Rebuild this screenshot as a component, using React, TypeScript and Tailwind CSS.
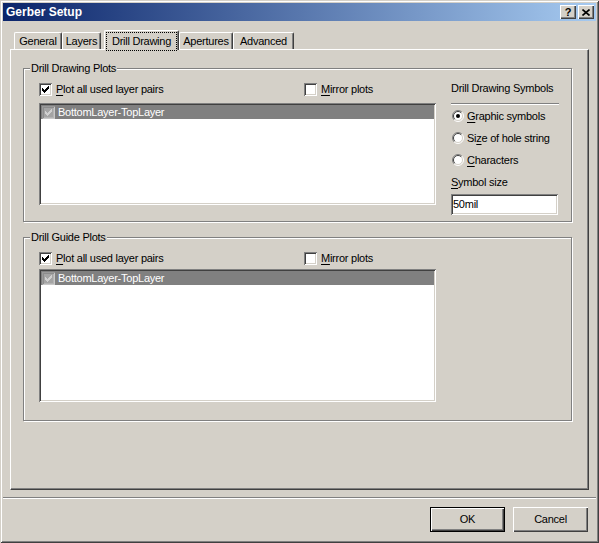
import type { ReactNode } from "react";

const TABS = [
  { label: "General", w: "w-[48px]" },
  { label: "Layers", w: "w-[39px]" },
];
const TABS_AFTER = [
  { label: "Apertures", w: "w-[54px]" },
  { label: "Advanced", w: "w-[61px]" },
];

function Mn({ children }: { children: ReactNode }) {
  return <span className="underline decoration-1 underline-offset-[2px]">{children}</span>;
}

function CheckMark({ color }: { color: string }) {
  const starts = [2, 3, 4, 3, 2, 1, 0];
  return (
    <svg className="absolute left-0 top-0" width="13" height="13" viewBox="0 0 13 13">
      {starts.map((r, i) => (
        <rect key={i} x={3 + i} y={3 + r} width="1" height="3" fill={color} />
      ))}
    </svg>
  );
}

function CheckBox({ checked }: { checked?: boolean }) {
  return (
    <span className="relative block h-[13px] w-[13px] shrink-0 bg-white shadow-[inset_1px_1px_0_#808080,inset_-1px_-1px_0_#ffffff,inset_2px_2px_0_#404040,inset_-2px_-2px_0_#d4d0c8]">
      {checked && <CheckMark color="#000000" />}
    </span>
  );
}

function DimCheckBox() {
  return (
    <span className="relative block h-[13px] w-[13px] shrink-0 bg-[#a4a4a4] shadow-[inset_1px_1px_0_#9a9a9a,inset_-1px_-1px_0_#c8c8c8,inset_2px_2px_0_#8c8c8c,inset_-2px_-2px_0_#b4b4b4]">
      <CheckMark color="#d0d0d0" />
    </span>
  );
}

function Radio({ on }: { on?: boolean }) {
  return (
    <svg width="12" height="12" viewBox="0 0 12 12" className="shrink-0">
      <circle cx="6" cy="6" r="5" fill="#ffffff" />
      <path d="M2.1 9.9A5.5 5.5 0 0 1 9.9 2.1" stroke="#808080" fill="none" />
      <path d="M9.9 2.1A5.5 5.5 0 0 1 2.1 9.9" stroke="#ffffff" fill="none" />
      <path d="M2.8 9.2A4.5 4.5 0 0 1 9.2 2.8" stroke="#404040" fill="none" />
      <path d="M9.2 2.8A4.5 4.5 0 0 1 2.8 9.2" stroke="#d4d0c8" fill="none" />
      {on && <circle cx="6" cy="6" r="2" fill="#000000" />}
    </svg>
  );
}

function PlotRow() {
  return (
    <div className="flex h-[13px] items-center leading-[13px]">
      <div className="flex w-[265px] items-center gap-[4px]">
        <CheckBox checked />
        <span>
          <Mn>P</Mn>lot all used layer pairs
        </span>
      </div>
      <div className="flex items-center gap-[4px]">
        <CheckBox />
        <span>
          <Mn>M</Mn>irror plots
        </span>
      </div>
    </div>
  );
}

function LayerList({ className }: { className: string }) {
  return (
    <div
      className={`w-[397px] bg-white p-[2px] shadow-[inset_1px_1px_0_#808080,inset_-1px_-1px_0_#ffffff,inset_2px_2px_0_#404040,inset_-2px_-2px_0_#d4d0c8] ${className}`}
    >
      <div className="flex h-[14px] items-center gap-[3px] bg-[#808080] pl-[1px] leading-[13px] text-white">
        <DimCheckBox />
        <span>BottomLayer-TopLayer</span>
      </div>
    </div>
  );
}

function GroupLabel({ children }: { children: ReactNode }) {
  return (
    <span className="absolute left-[6px] top-[-7px] bg-[#d4d0c8] px-[1px] leading-[13px]">{children}</span>
  );
}

function CaptionButton({ children }: { children: ReactNode }) {
  return (
    <div className="flex h-[14px] w-[16px] items-center justify-center bg-[#d4d0c8] shadow-[inset_1px_1px_0_#ffffff,inset_-1px_-1px_0_#404040,inset_-2px_-2px_0_#808080]">
      {children}
    </div>
  );
}

export default function App() {
  return (
    <div className="flex h-[543px] w-[599px] flex-col overflow-hidden bg-[#d4d0c8] p-[3px] font-['Liberation_Sans',Arial,sans-serif] text-[11px] tracking-[-0.25px] text-black shadow-[inset_1px_1px_0_#d4d0c8,inset_-1px_-1px_0_#404040,inset_2px_2px_0_#ffffff,inset_-2px_-2px_0_#808080]">
      {/* Title bar */}
      <div className="flex h-[18px] shrink-0 items-center bg-[linear-gradient(to_right,#0a246a,#a6caf0)] pl-[3px] pr-[2px]">
        <span className="flex-1 text-[12px] font-bold tracking-normal text-white">Gerber Setup</span>
        <div className="flex gap-[2px]">
          <CaptionButton>
            <span className="text-[11px] font-bold leading-none tracking-normal">?</span>
          </CaptionButton>
          <CaptionButton>
            <svg width="8" height="7" viewBox="0 0 8 7">
              <path d="M0.5 0.5L7.5 6.5M7.5 0.5L0.5 6.5" stroke="#000000" strokeWidth="1.6" />
            </svg>
          </CaptionButton>
        </div>
      </div>

      {/* Tabs */}
      <div className="relative z-10 ml-[11px] mt-[9px] flex h-[19px] shrink-0 items-end">
        {TABS.map((t) => (
          <div
            key={t.label}
            className={`flex h-[17px] items-center justify-center rounded-t-[2px] border-l border-t border-r border-l-white border-t-white border-r-[#404040] shadow-[inset_-1px_0_0_#808080] ${t.w}`}
          >
            {t.label}
          </div>
        ))}
        <div className="-mb-px ml-[3px] flex h-[20px] w-[75px] flex-col rounded-t-[2px] border-l border-t border-r border-l-white border-t-white border-r-[#404040] bg-[#d4d0c8] pb-[1px] pl-[1px] pr-px pt-[1px] shadow-[inset_-1px_0_0_#808080]">
          <div className="flex flex-1 items-center justify-center border border-dotted border-black">
            Drill Drawing
          </div>
        </div>
        {TABS_AFTER.map((t) => (
          <div
            key={t.label}
            className={`flex h-[17px] items-center justify-center rounded-t-[2px] border-l border-t border-r border-l-white border-t-white border-r-[#404040] shadow-[inset_-1px_0_0_#808080] ${t.w}`}
          >
            {t.label}
          </div>
        ))}
      </div>

      {/* Tab panel */}
      <div className="relative z-0 ml-[7px] h-[441px] w-[579px] shrink-0 border border-l-white border-t-white border-r-[#404040] border-b-[#404040] pl-[12px] shadow-[inset_-1px_-1px_0_#808080]">
        {/* Drill Drawing Plots */}
        <div className="relative mt-[18px] flex h-[154px] w-[549px] border border-[#808080] pl-[15px] pt-[13px] shadow-[inset_1px_1px_0_#ffffff,1px_1px_0_#ffffff]">
          <GroupLabel>Drill Drawing Plots</GroupLabel>
          <div className="mt-[1px] w-[397px]">
            <PlotRow />
            <LayerList className="mt-[7px] h-[102px]" />
          </div>
          <div className="ml-[15px] w-[108px]">
            <div className="leading-[13px]">Drill Drawing Symbols</div>
            <div className="mt-[8px] h-[2px] border-t border-b border-t-[#808080] border-b-white" />
            <div className="flex h-[22px] items-center gap-[3px] pl-[1px]">
              <Radio on />
              <span>
                <Mn>G</Mn>raphic symbols
              </span>
            </div>
            <div className="flex h-[22px] items-center gap-[3px] pl-[1px]">
              <Radio />
              <span>
                Si<Mn>z</Mn>e of hole string
              </span>
            </div>
            <div className="flex h-[22px] items-center gap-[3px] pl-[1px]">
              <Radio />
              <span>
                <Mn>C</Mn>haracters
              </span>
            </div>
            <div className="mt-[5px] leading-[13px]">
              <Mn>S</Mn>ymbol size
            </div>
            <div className="mt-[5px] h-[21px] w-[107px] bg-white p-[2px] leading-[17px] shadow-[inset_1px_1px_0_#808080,inset_-1px_-1px_0_#ffffff,inset_2px_2px_0_#404040,inset_-2px_-2px_0_#d4d0c8]">
              50mil
            </div>
          </div>
        </div>

        {/* Drill Guide Plots */}
        <div className="relative mt-[15px] h-[184px] w-[549px] border border-[#808080] pl-[15px] pt-[14px] shadow-[inset_1px_1px_0_#ffffff,1px_1px_0_#ffffff]">
          <GroupLabel>Drill Guide Plots</GroupLabel>
          <div className="w-[397px]">
            <PlotRow />
            <LayerList className="mt-[4px] h-[133px]" />
          </div>
        </div>
      </div>

      {/* Separator */}
      <div className="mt-[7px] h-[2px] shrink-0 border-t border-b border-t-[#808080] border-b-white" />

      {/* Buttons */}
      <div className="mt-[8px] flex shrink-0 justify-end gap-[8px] pr-[8px]">
        <button
          type="button"
          className="h-[25px] w-[75px] border border-black bg-[#d4d0c8] text-[11px] shadow-[inset_1px_1px_0_#ffffff,inset_-1px_-1px_0_#404040,inset_-2px_-2px_0_#808080]"
        >
          OK
        </button>
        <button
          type="button"
          className="h-[25px] w-[75px] bg-[#d4d0c8] text-[11px] shadow-[inset_1px_1px_0_#ffffff,inset_-1px_-1px_0_#404040,inset_-2px_-2px_0_#808080]"
        >
          Cancel
        </button>
      </div>
    </div>
  );
}
